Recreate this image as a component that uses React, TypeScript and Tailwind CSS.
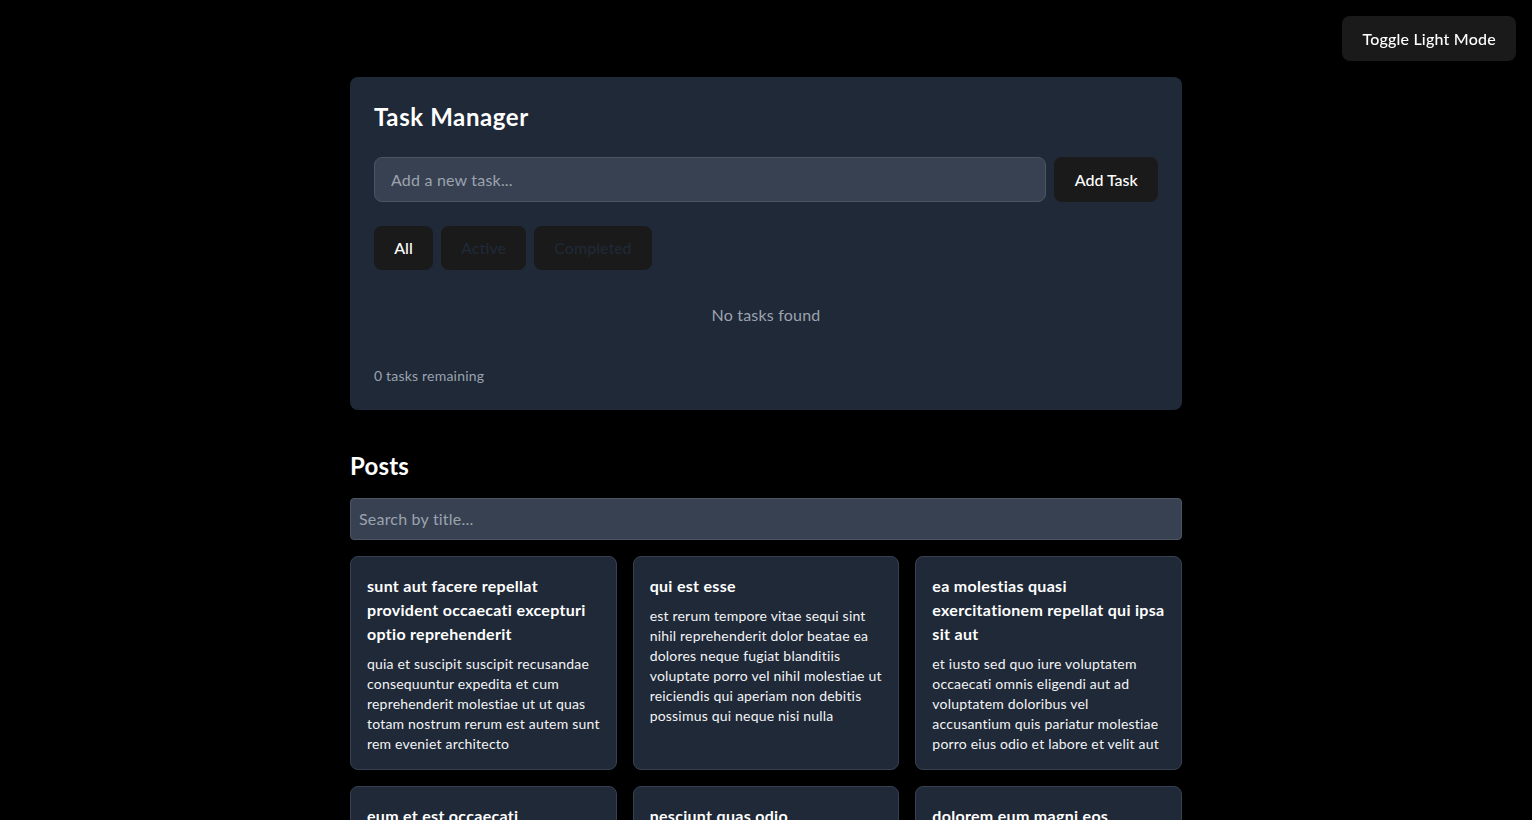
import React, { useState } from "react";

const posts = [
  {
    title: "sunt aut facere repellat provident occaecati excepturi optio reprehenderit",
    body: "quia et suscipit suscipit recusandae consequuntur expedita et cum reprehenderit molestiae ut ut quas totam nostrum rerum est autem sunt rem eveniet architecto",
  },
  {
    title: "qui est esse",
    body: "est rerum tempore vitae sequi sint nihil reprehenderit dolor beatae ea dolores neque fugiat blanditiis voluptate porro vel nihil molestiae ut reiciendis qui aperiam non debitis possimus qui neque nisi nulla",
  },
  {
    title: "ea molestias quasi exercitationem repellat qui ipsa sit aut",
    body: "et iusto sed quo iure voluptatem occaecati omnis eligendi aut ad voluptatem doloribus vel accusantium quis pariatur molestiae porro eius odio et labore et velit aut",
  },
  {
    title: "eum et est occaecati",
    body: "ullam et saepe reiciendis voluptatem adipisci sit amet autem assumenda provident rerum culpa quis hic commodi nesciunt rem tenetur doloremque ipsam iure quis sunt voluptatem rerum illo velit",
  },
  {
    title: "nesciunt quas odio",
    body: "repudiandae veniam quaerat sunt sed alias aut fugiat sit autem sed est voluptatem omnis possimus esse voluptatibus quis est aut tenetur dolor neque",
  },
  {
    title: "dolorem eum magni eos aperiam quia",
    body: "ut aspernatur corporis harum nihil quis provident sequi mollitia nobis aliquid molestiae perspiciatis et ea nemo ab reprehenderit accusantium quas voluptate dolores velit et doloremque molestiae",
  },
];

const btn =
  "rounded-lg border border-transparent bg-[#1a1a1a] px-[19.2px] text-base leading-6 font-medium";

export default function App() {
  const [filter, setFilter] = useState("All");
  return (
    <div
      className="min-h-screen bg-black text-white tracking-[0.2px]"
      style={{ fontFamily: "Lato, 'Noto Sans', sans-serif" }}
    >
      <button className={`${btn} py-[9.6px] fixed top-4 right-4 text-white`}>Toggle Light Mode</button>
      <div className="mx-auto w-[832px] pt-[77px] pb-10">
        <div className="rounded-lg bg-[#1f2937] p-6">
          <h1 className="mb-6 text-2xl font-bold leading-8 tracking-[0.6px]">Task Manager</h1>
          <div className="flex gap-2">
            <input
              className="flex-1 rounded-lg border border-[#4b5563] bg-[#374151] px-4 text-base text-white placeholder:text-[#9ca3af] outline-none"
              placeholder="Add a new task..."
            />
            <button className={`${btn} py-[9.6px] tracking-normal text-white`}>Add Task</button>
          </div>
          <div className="mt-6 mb-4 flex gap-2">
            {["All", "Active", "Completed"].map((f) => (
              <button
                key={f}
                onClick={() => setFilter(f)}
                className={`${btn} py-[9px] tracking-normal ${filter === f ? "text-white" : "text-[#1f2937]"}`}
              >
                {f}
              </button>
            ))}
          </div>
          <p className="pt-[17px] pb-[15px] text-center text-base leading-6 text-[#9ca3af]">No tasks found</p>
          <p className="mt-6 text-sm leading-5 text-[#9ca3af]">0 tasks remaining</p>
        </div>

        <h2 className="mt-10 mb-4 text-2xl font-bold leading-8">Posts</h2>
        <input
          className="mb-4 w-full rounded border border-[#4b5563] bg-[#374151] p-2 text-base leading-6 text-white placeholder:text-[#9ca3af] outline-none"
          placeholder="Search by title..."
        />
        <div className="grid grid-cols-3 gap-4">
          {posts.map((p) => (
            <div key={p.title} className="rounded-lg border border-[#374151] bg-[#1f2937] pt-[17px] px-4 pb-[15px]">
              <h3 className="mb-2 text-base leading-6 font-bold tracking-[0.3px] text-white">{p.title}</h3>
              <p className="text-sm leading-5 text-[#f3f4f6]">{p.body}</p>
            </div>
          ))}
        </div>
      </div>
    </div>
  );
}
